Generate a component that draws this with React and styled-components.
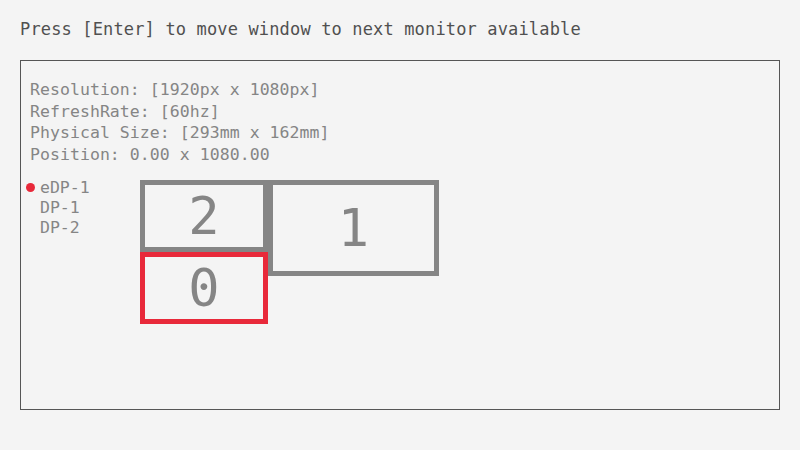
import React from 'react';
import styled, { createGlobalStyle } from 'styled-components';

const GlobalStyle = createGlobalStyle`
  html, body {
    margin: 0;
    padding: 0;
    background: #f4f4f4;
  }
  body {
    font-family: 'DejaVu Sans Mono', 'Liberation Mono', monospace;
  }
`;

const info = [
  'Resolution: [1920px x 1080px]',
  'RefreshRate: [60hz]',
  'Physical Size: [293mm x 162mm]',
  'Position: 0.00 x 1080.00'
];

const outputs = [
  { name: 'eDP-1', active: true },
  { name: 'DP-1' },
  { name: 'DP-2' }
];

const monitors = [
  { id: 2, x: 0, y: 0, w: 128, h: 72 },
  { id: 1, x: 128, y: 0, w: 171, h: 96 },
  { id: 0, x: 0, y: 72, w: 128, h: 72, active: true }
];

const App = () => (
  <Page>
    <GlobalStyle />
    <Hint>Press [Enter] to move window to next monitor available</Hint>
    <Panel>
      <Info>
        {info.map(line => (
          <InfoLine key={line}>{line}</InfoLine>
        ))}
      </Info>
      <Row>
        <OutputList>
          {outputs.map(o => (
            <Output key={o.name} active={o.active}>
              {o.name}
            </Output>
          ))}
        </OutputList>
        <Canvas>
          {monitors.map(m => (
            <Monitor
              key={m.id}
              active={m.active}
              style={{ left: m.x, top: m.y, width: m.w, height: m.h }}
            >
              {m.id}
            </Monitor>
          ))}
        </Canvas>
      </Row>
    </Panel>
  </Page>
);

const Page = styled.div`
  width: 800px;
  height: 450px;
  overflow: hidden;
  padding-top: 19px;
  box-sizing: border-box;
`;

const Hint = styled.div`
  margin-left: 20px;
  font-size: 17px;
  letter-spacing: 0.15px;
  line-height: 20px;
  color: #505050;
`;

const Panel = styled.div`
  margin: 21px 20px 0;
  height: 350px;
  box-sizing: border-box;
  border: 1px solid #555;
  padding: 18px 9px 0;
`;

const Info = styled.div`
  display: flex;
  flex-direction: column;
`;

const InfoLine = styled.div`
  font-size: 16.5px;
  letter-spacing: 0.05px;
  line-height: 21.5px;
  color: #858585;
`;

const Row = styled.div`
  display: flex;
  margin-top: 13px;
`;

const OutputList = styled.div`
  display: flex;
  flex-direction: column;
  width: 100px;
  padding-left: 10px;
`;

const Output = styled.div`
  position: relative;
  font-size: 16.5px;
  line-height: 20px;
  color: #858585;

  &::before {
    content: '';
    display: ${({ active }) => (active ? 'block' : 'none')};
    position: absolute;
    left: -14px;
    top: 5px;
    width: 9px;
    height: 9px;
    border-radius: 50%;
    background: #e8293a;
  }
`;

const Canvas = styled.div`
  position: relative;
  margin-top: 2px;
  width: 300px;
  height: 145px;
`;

const Monitor = styled.div`
  position: absolute;
  box-sizing: border-box;
  display: flex;
  align-items: center;
  justify-content: center;
  border: 5px solid ${({ active }) => (active ? '#e8293a' : '#858585')};
  font-size: 52px;
  line-height: 1;
  color: #858585;
  z-index: ${({ active }) => (active ? 2 : 1)};
`;

export default App;
